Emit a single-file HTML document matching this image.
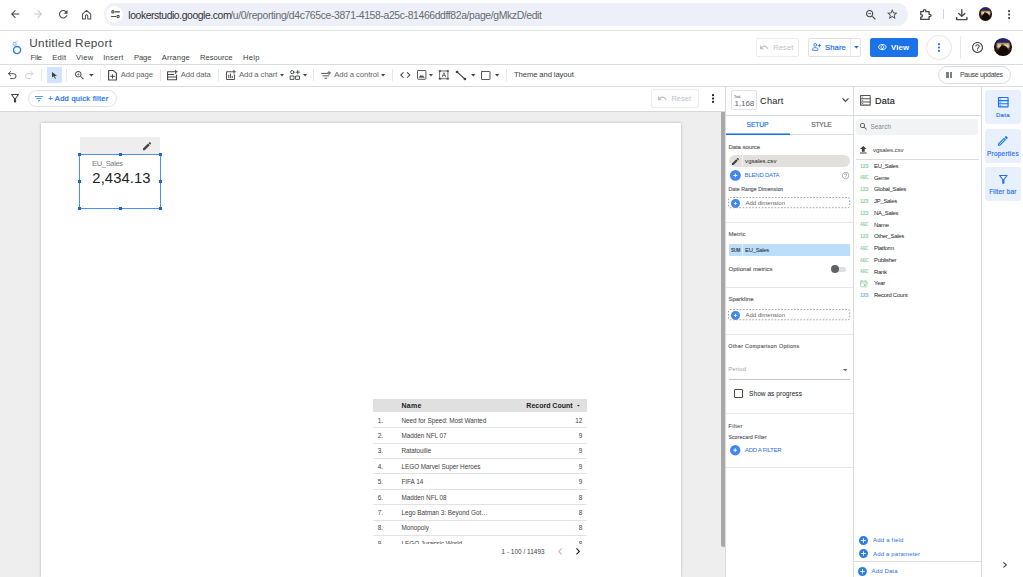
<!DOCTYPE html>
<html lang="en">
<head>
<meta charset="utf-8">
<title>Untitled Report - Looker Studio</title>
<style>
*{box-sizing:border-box;margin:0;padding:0}
html,body{width:1023px;height:577px;overflow:hidden;background:#fff;font-family:"Liberation Sans",sans-serif;color:#3c4043}
.a{position:absolute}
.t{position:absolute;white-space:nowrap;line-height:1}
svg{position:absolute;overflow:visible}

</style>
</head>
<body>
<div class="a" style="left:0px;top:0px;width:1023px;height:30px;background:#ffffff;"></div>
<div class="a" style="left:0px;top:30px;width:1023px;height:1px;background:#e1e3e6;"></div>
<svg style="left:10.6px;top:10.3px;width:8.2px;height:8.2px" viewBox="4 4 16 16" preserveAspectRatio="none" fill="#474747" ><path d="M20 11H7.83l5.59-5.59L12 4l-8 8 8 8 1.41-1.41L7.83 13H20v-2z"/></svg>
<svg style="left:34.4px;top:10.3px;width:8.1px;height:8.2px" viewBox="4 4 16 16" preserveAspectRatio="none" fill="#c7c7c7" ><path d="M12 4l-1.41 1.41L16.17 11H4v2h12.17l-5.58 5.59L12 20l8-8z"/></svg>
<svg style="left:58.5px;top:10px;width:8.5px;height:8.5px" viewBox="4 4 16 16" preserveAspectRatio="none" fill="#474747" ><path d="M17.65 6.35C16.2 4.9 14.21 4 12 4c-4.42 0-7.99 3.58-7.99 8s3.57 8 7.99 8c3.73 0 6.84-2.55 7.73-6h-2.08c-.82 2.33-3.04 4-5.65 4-3.31 0-6-2.69-6-6s2.69-6 6-6c1.66 0 3.14.69 4.22 1.78L13 11h7V4l-2.35 2.35z"/></svg>
<svg style="left:82px;top:9.6px;width:9.2px;height:9.6px" viewBox="2 2 20 20" preserveAspectRatio="none" fill="none" stroke="#474747" stroke-width="2.1" stroke-linecap="round" stroke-linejoin="round" ><path d="M3 10.5 12 3l9 7.5V21h-6.5v-6.5a2.5 2.5 0 0 0-5 0V21H3z"/></svg>
<div class="a" style="left:104px;top:3px;width:803.5px;height:22.6px;background:#edf0f9;border-radius:11.3px;"></div>
<div class="a" style="left:106px;top:5.6px;width:17.4px;height:17.4px;background:#ffffff;border-radius:8.7px;"></div>
<svg style="left:111px;top:10.1px;width:9px;height:8.4px" viewBox="3 4 18 16" preserveAspectRatio="none" fill="none" stroke="#474747" stroke-width="2.1" stroke-linecap="round" stroke-linejoin="round" ><path d="M11.500 7.500h8.500M4 16.500h8.500"/><circle cx="6.800" cy="7.500" r="2.300"/><circle cx="17.200" cy="16.500" r="2.300"/></svg>
<svg style="left:866px;top:9.6px;width:9.8px;height:9.8px" viewBox="3 3 17.49 17.49" preserveAspectRatio="none" fill="#474747" ><path d="M15.5 14h-.79l-.28-.27C15.41 12.59 16 11.11 16 9.5 16 5.91 13.09 3 9.5 3S3 5.91 3 9.5 5.91 16 9.5 16c1.61 0 3.09-.59 4.23-1.57l.27.28v.79l5 4.99L20.49 19l-4.99-5zm-6 0C7.01 14 5 11.99 5 9.5S7.01 5 9.5 5 14 7.01 14 9.5 11.99 14 9.5 14z"/><path d="M7 8.75h5v1.5H7z"/></svg>
<svg style="left:887px;top:9.3px;width:10.5px;height:10.0px" viewBox="2 2 20 19" preserveAspectRatio="none" fill="#474747" ><path d="M22 9.24l-7.19-.62L12 2 9.19 8.63 2 9.24l5.46 4.73L5.82 21 12 17.27 18.18 21l-1.63-7.03L22 9.24zM12 15.4l-3.76 2.27 1-4.28-3.32-2.88 4.38-.38L12 6.1l1.71 4.04 4.38.38-3.32 2.88 1 4.28L12 15.4z"/></svg>
<svg style="left:920px;top:8.7px;width:11.8px;height:11.2px" viewBox="3.4 3.3 17.7 17.8" preserveAspectRatio="none" fill="none" stroke="#474747" stroke-width="2" stroke-linecap="round" stroke-linejoin="round" stroke-linejoin="round"><path d="M4.500 7.500H8.400V6.300a1.900 1.900 0 0 1 3.800 0V7.500H17v4.300h1.100a1.900 1.900 0 0 1 0 3.800H17V20H4.500v-3.900h.700a2 2 0 0 0 0-4h-.700z"/></svg>
<div class="a" style="left:942.8px;top:9px;width:1.0px;height:10.4px;background:#c2d7f7;"></div>
<svg style="left:955.6px;top:8.8px;width:11.6px;height:11.2px" viewBox="3.5 3 17.0 17.5" preserveAspectRatio="none" fill="none" stroke="#474747" stroke-width="2" stroke-linecap="round" stroke-linejoin="round" ><path d="M12 4v10M7.5 10l4.5 4.5 4.5-4.5M4.5 16v3.5h15V16"/></svg>
<div class="a" style="left:978.7px;top:7.2px;width:13.6px;height:13.6px;border-radius:50%;background:radial-gradient(ellipse 30% 42% at 52% 80%,#140b08 0 85%,transparent 100%),linear-gradient(#b94c1f,#b94c1f) 46% 44%/15% 24% no-repeat,linear-gradient(90deg,#20150f 0 10%,transparent 22% 80%,#20150f 92%),linear-gradient(#24236b 0 24%,#b99a3c 29% 33%,#d9cdb8 38% 50%,#7a5a30 58%,#1d120b 70%)"></div>
<svg style="left:1008.3px;top:9.8px;width:2.2px;height:9.2px" viewBox="10 4 4 16" preserveAspectRatio="none" fill="#474747" ><path d="M12 8c1.1 0 2-.9 2-2s-.9-2-2-2-2 .9-2 2 .9 2 2 2zm0 2c-1.1 0-2 .9-2 2s.9 2 2 2 2-.9 2-2-.9-2-2-2zm0 6c-1.1 0-2 .9-2 2s.9 2 2 2 2-.9 2-2-.9-2-2-2z"/></svg>
<div class="a" style="left:0px;top:31px;width:1023px;height:33px;background:#ffffff;"></div>
<div class="a" style="left:0px;top:64px;width:1023px;height:1px;background:#dadce0;"></div>
<svg style="left:10px;top:38px;width:14px;height:18px" viewBox="10 38 14 18" fill="none" stroke="#2b7bee"><circle cx="17.050" cy="50.100" r="3.550" stroke-width="1.450"/><circle cx="14.700" cy="43.900" r="1.550" stroke-width=".850" stroke="#6ea3f3"/><circle cx="17" cy="41.400" r=".650" stroke-width=".550" stroke="#a8c7fa"/></svg>
<div class="a" style="left:755.9px;top:38px;width:42.8px;height:18.8px;border:1px solid #ececec;border-radius:2px;"></div>
<svg style="left:760px;top:45.1px;width:8.4px;height:4.6px" viewBox="2 7 20.5 9.5" preserveAspectRatio="none" fill="#bdc1c6" ><path d="M12.5 8c-2.65 0-5.05.99-6.9 2.6L2 7v9h9l-3.62-3.62c1.39-1.16 3.16-1.88 5.12-1.88 3.54 0 6.55 2.31 7.6 5.5l2.37-.78C21.08 11.03 17.15 8 12.5 8z"/></svg>
<div class="a" style="left:807.5px;top:38px;width:53.9px;height:18.8px;border:1px solid #e0e2e6;border-radius:2px;"></div>
<div class="a" style="left:850.4px;top:38.5px;width:1.0px;height:17.8px;background:#e4e6ea;"></div>
<svg style="left:811.6px;top:43.2px;width:9.2px;height:7.4px" viewBox="1.5 4 21.5 16" preserveAspectRatio="none" fill="none" stroke="#1a73e8" stroke-width="1.9" stroke-linecap="round" stroke-linejoin="round" ><circle cx="9" cy="8" r="3.2"/><path d="M2.5 19v-1.2c0-2.4 3.2-3.8 6.5-3.8s6.500 1.400 6.500 3.8V19zM19 6.500v6M16 9.500h6"/></svg>
<svg style="left:853.7px;top:46.199999999999996px;width:4.9px;height:2.4px" viewBox="7 10 10 5" preserveAspectRatio="none" fill="#1a73e8" ><path d="M7 10l5 5 5-5z"/></svg>
<div class="a" style="left:869.7px;top:37.8px;width:48.3px;height:19.1px;background:#1a73e8;border-radius:2.2px;"></div>
<svg style="left:877.9px;top:44.2px;width:8.7px;height:6.2px" viewBox="1 4 22 15" preserveAspectRatio="none" fill="#ffffff" ><path d="M12 6c3.79 0 7.17 2.13 8.82 5.5C19.17 14.87 15.79 17 12 17s-7.17-2.13-8.82-5.5C4.83 8.13 8.21 6 12 6m0-2C7 4 2.73 7.11 1 11.5 2.73 15.89 7 19 12 19s9.27-3.11 11-7.5C21.27 7.11 17 4 12 4zm0 5c1.38 0 2.5 1.12 2.5 2.5S13.38 14 12 14s-2.5-1.12-2.5-2.5S10.62 9 12 9m0-2c-2.48 0-4.5 2.02-4.5 4.5S9.52 16 12 16s4.5-2.02 4.5-4.5S14.48 7 12 7z"/></svg>
<div class="a" style="left:926.3px;top:34.7px;width:25.5px;height:25.1px;border:1px solid #e3e5e8;border-radius:13px;"></div>
<svg style="left:938.3px;top:42.9px;width:2.0px;height:9.1px" viewBox="10 4 4 16" preserveAspectRatio="none" fill="#1a73e8" ><path d="M12 8c1.1 0 2-.9 2-2s-.9-2-2-2-2 .9-2 2 .9 2 2 2zm0 2c-1.1 0-2 .9-2 2s.9 2 2 2 2-.9 2-2-.9-2-2-2zm0 6c-1.1 0-2 .9-2 2s.9 2 2 2 2-.9 2-2-.9-2-2-2z"/></svg>
<div class="a" style="left:960.3px;top:35.5px;width:1.0px;height:23.5px;background:#e8eaed;"></div>
<svg style="left:971.6px;top:41.9px;width:11.0px;height:11.0px" viewBox="2 2 20 20" preserveAspectRatio="none" fill="#444746" ><path d="M11 18h2v-2h-2v2zm1-16C6.48 2 2 6.48 2 12s4.48 10 10 10 10-4.48 10-10S17.52 2 12 2zm0 18c-4.41 0-8-3.59-8-8s3.59-8 8-8 8 3.59 8 8-3.59 8-8 8zm0-14c-2.21 0-4 1.79-4 4h2c0-1.1.9-2 2-2s2 .9 2 2c0 2-3 1.75-3 5h2c0-2.25 3-2.5 3-5 0-2.21-1.79-4-4-4z"/></svg>
<div class="a" style="left:994px;top:38.4px;width:17.6px;height:17.6px;border-radius:50%;background:radial-gradient(ellipse 30% 42% at 52% 80%,#140b08 0 85%,transparent 100%),linear-gradient(#b94c1f,#b94c1f) 46% 44%/15% 24% no-repeat,linear-gradient(90deg,#20150f 0 10%,transparent 22% 80%,#20150f 92%),linear-gradient(#24236b 0 24%,#b99a3c 29% 33%,#d9cdb8 38% 50%,#7a5a30 58%,#1d120b 70%)"></div>
<div class="a" style="left:0px;top:65px;width:1023px;height:21px;background:#ffffff;"></div>
<div class="a" style="left:0px;top:86px;width:1023px;height:1px;background:#dadce0;"></div>
<svg style="left:8.1px;top:71px;width:8.5px;height:8px" viewBox="2.5 3 18.5 18" preserveAspectRatio="none" fill="none" stroke="#3c4043" stroke-width="2.1" stroke-linecap="round" stroke-linejoin="round" ><path d="M8.2 4.200 3.5 9l4.700 4.800M4 9h10.500a5.500 5.500 0 0 1 0 11H8"/></svg>
<svg style="left:25px;top:71px;width:8.5px;height:8px" viewBox="2.5 3 18.5 18" preserveAspectRatio="none" fill="none" stroke="#c9ccd0" stroke-width="2.1" stroke-linecap="round" stroke-linejoin="round" transform="scale(-1,1)"><path d="M8.2 4.200 3.5 9l4.700 4.800M4 9h10.500a5.500 5.500 0 0 1 0 11H8"/></svg>
<div class="a" style="left:41.1px;top:68.9px;width:1.0px;height:12.5px;background:#e4e6e9;"></div>
<div class="a" style="left:46.5px;top:67px;width:15.7px;height:15.6px;background:#d2e3fc;border-radius:1px;"></div>
<svg style="left:52px;top:72.2px;width:5px;height:6.8px" viewBox="7 2 12 20" preserveAspectRatio="none" fill="#3c4043" ><path d="M7 2l12 11.2-5.8.5 3.3 7.3-2.2 1-3.2-7.4L7 18.5z"/></svg>
<div class="a" style="left:65.9px;top:68.9px;width:1.0px;height:12.5px;background:#e4e6e9;"></div>
<svg style="left:74.75px;top:70.75px;width:8.85px;height:8.55px" viewBox="3 3 17.49 17.49" preserveAspectRatio="none" fill="#444746" ><path d="M15.5 14h-.79l-.28-.27C15.41 12.59 16 11.11 16 9.5 16 5.91 13.09 3 9.5 3S3 5.91 3 9.5 5.91 16 9.5 16c1.61 0 3.09-.59 4.23-1.57l.27.28v.79l5 4.99L20.49 19l-4.99-5zm-6 0C7.01 14 5 11.99 5 9.5S7.01 5 9.5 5 14 7.01 14 9.5 11.99 14 9.5 14z"/><path d="M12 10h-2v2H9v-2H7V9h2V7h1v2h2z"/></svg>
<svg style="left:88.7px;top:73.6px;width:4.7px;height:2.4px" viewBox="7 10 10 5" preserveAspectRatio="none" fill="#444746" ><path d="M7 10l5 5 5-5z"/></svg>
<div class="a" style="left:99.8px;top:68.9px;width:1.0px;height:12.5px;background:#e4e6e9;"></div>
<svg style="left:108px;top:70px;width:9px;height:10.5px" viewBox="5 2 15 20" preserveAspectRatio="none" fill="none" stroke="#444746" stroke-width="1.9" stroke-linecap="round" stroke-linejoin="round" ><path d="M6 3h8l5 5v13H6z" /><path d="M12.500 10.500v7M9 14h7" stroke-width="1.700"/></svg>
<div class="a" style="left:159.9px;top:68.9px;width:1.0px;height:12.5px;background:#e4e6e9;"></div>
<svg style="left:166.9px;top:69.8px;width:10.7px;height:10.2px" viewBox="3 1.5 19 19.5" preserveAspectRatio="none" fill="none" stroke="#444746" stroke-width="1.9" stroke-linecap="round" stroke-linejoin="round" ><path d="M15 5H4v15h16V11M4 10h11M4 15h16M18.500 2v6M15.500 5h6"/></svg>
<div class="a" style="left:217.5px;top:68.9px;width:1.0px;height:12.5px;background:#e4e6e9;"></div>
<svg style="left:225.6px;top:69.8px;width:9.7px;height:10.0px" viewBox="3 1 19.5 20" preserveAspectRatio="none" fill="none" stroke="#444746" stroke-width="1.9" stroke-linecap="round" stroke-linejoin="round" ><path d="M14 4.500H4V20h16V10.500M8.500 16.500v-5M12 16.500V9M15.500 16.500v-3M19 1.500v6M16 4.500h6"/></svg>
<svg style="left:280.3px;top:73.6px;width:4.1px;height:2.4px" viewBox="7 10 10 5" preserveAspectRatio="none" fill="#444746" ><path d="M7 10l5 5 5-5z"/></svg>
<svg style="left:290px;top:69.9px;width:10px;height:9.9px" viewBox="2 1.5 20 20.5" preserveAspectRatio="none" fill="none" stroke="#444746" stroke-width="1.9" stroke-linecap="round" stroke-linejoin="round" ><circle cx="6.500" cy="6" r="3.300"/><rect x="3" y="14" width="7" height="7"/><rect x="14" y="14" width="7" height="7"/><path d="M17.500 2.500v7M14 6h7"/></svg>
<svg style="left:302.7px;top:73.6px;width:4.2px;height:2.4px" viewBox="7 10 10 5" preserveAspectRatio="none" fill="#444746" ><path d="M7 10l5 5 5-5z"/></svg>
<div class="a" style="left:313.25px;top:68.9px;width:1.0px;height:12.5px;background:#e4e6e9;"></div>
<svg style="left:321px;top:70.6px;width:10px;height:8.0px" viewBox="2 2 20.5 16.5" preserveAspectRatio="none" fill="none" stroke="#444746" stroke-width="1.9" stroke-linecap="round" stroke-linejoin="round" ><path d="M3 7h12M6 12h12M10 17h4M18.500 3v6M15.500 6h6" /></svg>
<svg style="left:381.3px;top:73.6px;width:4.3px;height:2.4px" viewBox="7 10 10 5" preserveAspectRatio="none" fill="#444746" ><path d="M7 10l5 5 5-5z"/></svg>
<div class="a" style="left:392.0px;top:68.9px;width:1.0px;height:12.5px;background:#e4e6e9;"></div>
<svg style="left:400px;top:72.2px;width:10.6px;height:6.1px" viewBox="2 6 20 12" preserveAspectRatio="none" fill="#3c4043" ><path d="M9.4 16.6L4.8 12l4.6-4.6L8 6l-6 6 6 6 1.4-1.4zm5.2 0l4.6-4.6-4.6-4.6L16 6l6 6-6 6-1.4-1.4z"/></svg>
<svg style="left:416.9px;top:70px;width:9.4px;height:9.8px" viewBox="2.5 2.5 19.0 19.0" preserveAspectRatio="none" fill="none" stroke="#444746" stroke-width="1.8" stroke-linecap="round" stroke-linejoin="round" ><rect x="3.500" y="3.500" width="17" height="17" rx="1.500"/><path d="M7 16.500l3.200-4 2.300 2.800 1.700-2 2.800 3.200z" fill="#444746" stroke-width="1"/></svg>
<svg style="left:428.9px;top:73.6px;width:4.0px;height:2.4px" viewBox="7 10 10 5" preserveAspectRatio="none" fill="#444746" ><path d="M7 10l5 5 5-5z"/></svg>
<svg style="left:439px;top:70.1px;width:9.9px;height:9.7px" viewBox="2 2 20 20" preserveAspectRatio="none" fill="none" stroke="#444746" stroke-width="2" stroke-linecap="round" stroke-linejoin="round" ><rect x="4" y="4" width="16" height="16" stroke-width="1.600"/><path d="M8.500 16.500 12 7.500l3.500 9M9.800 13.500h4.400" stroke-width="1.500"/><path d="M2.500 2.500h3v3h-3zM18.500 2.500h3v3h-3zM2.500 18.500h3v3h-3zM18.500 18.500h3v3h-3z" fill="#444746" stroke-width=".5"/></svg>
<svg style="left:456px;top:70.6px;width:10px;height:9.0px" viewBox="2.5 2.5 19.0 19.0" preserveAspectRatio="none" fill="none" stroke="#3c4043" stroke-width="2" stroke-linecap="round" stroke-linejoin="round" ><path d="M5 5 19 19" stroke-width="2.200"/><circle cx="4.500" cy="4.500" r="1.600" fill="#3c4043"/><circle cx="19.500" cy="19.500" r="1.600" fill="#3c4043"/></svg>
<svg style="left:470.5px;top:73.6px;width:4.5px;height:2.4px" viewBox="7 10 10 5" preserveAspectRatio="none" fill="#444746" ><path d="M7 10l5 5 5-5z"/></svg>
<svg style="left:480.5px;top:70.6px;width:9.5px;height:9.0px" viewBox="2.5 2.5 19.0 19.0" preserveAspectRatio="none" fill="none" stroke="#444746" stroke-width="1.9" stroke-linecap="round" stroke-linejoin="round" ><rect x="3.500" y="3.500" width="17" height="17" rx="1"/></svg>
<svg style="left:494.7px;top:73.6px;width:4.4px;height:2.4px" viewBox="7 10 10 5" preserveAspectRatio="none" fill="#444746" ><path d="M7 10l5 5 5-5z"/></svg>
<div class="a" style="left:506.0px;top:68.9px;width:1.0px;height:12.5px;background:#e4e6e9;"></div>
<div class="a" style="left:938.2px;top:66.2px;width:73.0px;height:17.8px;border:1px solid #dadce0;border-radius:9px;"></div>
<div class="a" style="left:946.4px;top:72.2px;width:2.3px;height:5.5px;background:#7b7f84;"></div>
<div class="a" style="left:950.1px;top:72.2px;width:2.3px;height:5.5px;background:#7b7f84;"></div>
<div class="a" style="left:0px;top:87px;width:725px;height:24px;background:#ffffff;"></div>
<div class="a" style="left:0px;top:111px;width:725px;height:1px;background:#d9d9d9;"></div>
<svg style="left:11px;top:94.2px;width:8px;height:8.6px" viewBox="4 4 16 16" preserveAspectRatio="none" fill="#3c4043" ><path d="M7 6h10l-5.01 6.3L7 6zm-2.75-.39C6.27 8.2 10 13 10 13v6c0 .55.45 1 1 1h2c.55 0 1-.45 1-1v-6s3.72-4.8 5.74-7.39c.51-.66.04-1.61-.79-1.61H5.04c-.83 0-1.3.95-.79 1.61z"/></svg>
<div class="a" style="left:28.1px;top:90.2px;width:88.6px;height:17.0px;border:1px solid #dfe2e6;border-radius:8.5px;"></div>
<svg style="left:35px;top:96px;width:7.8px;height:5.2px" viewBox="3 6 18 12" preserveAspectRatio="none" fill="#1a73e8" ><path d="M10 18h4v-2h-4v2zM3 6v2h18V6H3zm3 7h12v-2H6v2z"/></svg>
<div class="a" style="left:651.2px;top:89.2px;width:48.2px;height:18.6px;border:1px solid #ececec;border-radius:2px;"></div>
<svg style="left:658px;top:96.3px;width:8.6px;height:4.5px" viewBox="2 7 20.5 9.5" preserveAspectRatio="none" fill="#bdc1c6" ><path d="M12.5 8c-2.65 0-5.05.99-6.9 2.6L2 7v9h9l-3.62-3.62c1.39-1.16 3.16-1.88 5.12-1.88 3.54 0 6.55 2.31 7.6 5.5l2.37-.78C21.08 11.03 17.15 8 12.5 8z"/></svg>
<svg style="left:711.5px;top:94.2px;width:2.1px;height:9.0px" viewBox="10 4 4 16" preserveAspectRatio="none" fill="#202124" ><path d="M12 8c1.1 0 2-.9 2-2s-.9-2-2-2-2 .9-2 2 .9 2 2 2zm0 2c-1.1 0-2 .9-2 2s.9 2 2 2 2-.9 2-2-.9-2-2-2zm0 6c-1.1 0-2 .9-2 2s.9 2 2 2 2-.9 2-2-.9-2-2-2z"/></svg>
<div class="a" style="left:0px;top:112px;width:725px;height:465px;background:#eeeeee;"></div>
<div class="a" style="left:40.5px;top:123px;width:640.1px;height:454px;background:#ffffff;box-shadow:0 0 2.5px rgba(0,0,0,.28);"></div>
<div class="a" style="left:721px;top:112px;width:4.5px;height:435.3px;background:#a8a8a8;border-radius:0 0 2.5px 2.5px;"></div>
<div class="a" style="left:80px;top:137px;width:80px;height:16.5px;background:#eeeeee;"></div>
<svg style="left:142.9px;top:142px;width:8.2px;height:8.2px" viewBox="3 3 18 18" preserveAspectRatio="none" fill="#444444" ><path d="M3 17.25V21h3.75L17.81 9.94l-3.75-3.75L3 17.25zM20.71 7.04c.39-.39.39-1.02 0-1.41l-2.34-2.34c-.39-.39-1.02-.39-1.41 0l-1.83 1.83 3.75 3.75 1.83-1.83z"/></svg>
<div class="a" style="left:79px;top:154px;width:82px;height:55px;border:1px solid #4c8df6;"></div>
<div class="a" style="left:77.89999999999999px;top:152.9px;width:3.4px;height:3.4px;background:#1a66d9;"></div>
<div class="a" style="left:77.89999999999999px;top:179.9px;width:3.4px;height:3.4px;background:#1a66d9;"></div>
<div class="a" style="left:77.89999999999999px;top:206.9px;width:3.4px;height:3.4px;background:#1a66d9;"></div>
<div class="a" style="left:118.5px;top:152.9px;width:3.4px;height:3.4px;background:#1a66d9;"></div>
<div class="a" style="left:118.5px;top:206.9px;width:3.4px;height:3.4px;background:#1a66d9;"></div>
<div class="a" style="left:158.9px;top:152.9px;width:3.4px;height:3.4px;background:#1a66d9;"></div>
<div class="a" style="left:158.9px;top:179.9px;width:3.4px;height:3.4px;background:#1a66d9;"></div>
<div class="a" style="left:158.9px;top:206.9px;width:3.4px;height:3.4px;background:#1a66d9;"></div>
<div class="a" style="left:373px;top:399px;width:214px;height:13.4px;background:#e0e0e0;"></div>
<svg style="left:576.7px;top:404.9px;width:2.8px;height:1.6px" viewBox="7 10 10 5" preserveAspectRatio="none" fill="#212121" ><path d="M7 10l5 5 5-5z"/></svg>
<div class="a" style="left:373px;top:427.1px;width:214px;height:1.0px;background:#e2e2e2;"></div>
<div class="a" style="left:373px;top:442.52000000000004px;width:214px;height:1.0px;background:#e2e2e2;"></div>
<div class="a" style="left:373px;top:457.94px;width:214px;height:1.0px;background:#e2e2e2;"></div>
<div class="a" style="left:373px;top:473.36px;width:214px;height:1.0px;background:#e2e2e2;"></div>
<div class="a" style="left:373px;top:488.78000000000003px;width:214px;height:1.0px;background:#e2e2e2;"></div>
<div class="a" style="left:373px;top:504.20000000000005px;width:214px;height:1.0px;background:#e2e2e2;"></div>
<div class="a" style="left:373px;top:519.62px;width:214px;height:1.0px;background:#e2e2e2;"></div>
<div class="a" style="left:373px;top:535.04px;width:214px;height:1.0px;background:#e2e2e2;"></div>
<svg style="left:557.5px;top:548px;width:4.1px;height:6.8px" viewBox="8 6 7.41 12" preserveAspectRatio="none" fill="#bdbdbd" ><path d="M15.41 7.41L14 6l-6 6 6 6 1.41-1.41L10.83 12z"/></svg>
<svg style="left:576px;top:548px;width:4.2px;height:6.8px" viewBox="8.59 6 7.41 12" preserveAspectRatio="none" fill="#212121" ><path d="M10 6L8.59 7.41 13.17 12l-4.58 4.59L10 18l6-6z"/></svg>
<div class="a" style="left:725.5px;top:87px;width:128.0px;height:490px;background:#ffffff;"></div>
<div class="a" style="left:725px;top:87px;width:1px;height:490px;background:#dcdcdc;"></div>
<div class="a" style="left:853px;top:87px;width:1px;height:490px;background:#dadce0;"></div>
<div class="a" style="left:726px;top:115px;width:128px;height:1px;background:#dadce0;"></div>
<div class="a" style="left:730.8px;top:90.3px;width:26.7px;height:20.2px;border:1px solid #e0e2e5;border-radius:2px;"></div>
<svg style="left:842px;top:98.4px;width:6.9px;height:4.2px" viewBox="6 8.59 12 7.41" preserveAspectRatio="none" fill="#444746" ><path d="M16.59 8.59L12 13.17 7.41 8.59 6 10l6 6 6-6z"/></svg>
<div class="a" style="left:726px;top:134px;width:127px;height:1px;background:#dadce0;"></div>
<div class="a" style="left:726px;top:133px;width:63.5px;height:1px;background:#7fadf3;"></div>
<div class="a" style="left:726px;top:134px;width:63.5px;height:1px;background:#1a73e8;"></div>
<div class="a" style="left:728.6px;top:155px;width:121.5px;height:11.8px;background:#e3dfdc;border-radius:6px;"></div>
<div class="a" style="left:741.9px;top:155px;width:0.8px;height:11.8px;background:#f3f1ef;"></div>
<svg style="left:732px;top:157.5px;width:7px;height:6.9px" viewBox="3 3 18 18" preserveAspectRatio="none" fill="#3c4043" ><path d="M3 17.25V21h3.75L17.81 9.94l-3.75-3.75L3 17.25zM20.71 7.04c.39-.39.39-1.02 0-1.41l-2.34-2.34c-.39-.39-1.02-.39-1.41 0l-1.83 1.83 3.75 3.75 1.83-1.83z"/></svg>
<svg style="left:729.6px;top:169.5px;width:10.8px;height:10.8px" viewBox="2 2 20 20" preserveAspectRatio="none" fill="#4285f4" ><circle cx="12" cy="12" r="10"/><path d="M12 8.400v7.200M8.400 12h7.200" stroke="#fff" stroke-width="1.900"/></svg>
<svg style="left:842.3px;top:171.8px;width:7.2px;height:7.2px" viewBox="2 2 20 20" preserveAspectRatio="none" fill="#9aa0a6" ><path d="M11 18h2v-2h-2v2zm1-16C6.48 2 2 6.48 2 12s4.48 10 10 10 10-4.48 10-10S17.52 2 12 2zm0 18c-4.41 0-8-3.59-8-8s3.59-8 8-8 8 3.59 8 8-3.59 8-8 8zm0-14c-2.21 0-4 1.79-4 4h2c0-1.1.9-2 2-2s2 .9 2 2c0 2-3 1.75-3 5h2c0-2.25 3-2.5 3-5 0-2.21-1.79-4-4-4z"/></svg>
<svg style="left:728.2px;top:197.4px;width:122.2px;height:11.2px" viewBox="0 0 122.2 11.2" fill="none"><rect x=".5" y=".5" width="121.2" height="10.2" rx="1.5" stroke="#9aa0a6" stroke-width=".9" stroke-dasharray="1.7 1.5"/></svg>
<svg style="left:731px;top:198.6px;width:9px;height:8.9px" viewBox="2 2 20 20" preserveAspectRatio="none" fill="#4285f4" ><circle cx="12" cy="12" r="10"/><path d="M12 8.400v7.200M8.400 12h7.200" stroke="#fff" stroke-width="1.900"/></svg>
<div class="a" style="left:726px;top:222px;width:127px;height:1px;background:#e4e6e9;"></div>
<div class="a" style="left:728.6px;top:244.2px;width:121.4px;height:11.5px;background:#bbdefb;border-radius:1px;"></div>
<div class="a" style="left:741.9px;top:244.2px;width:0.8px;height:11.5px;background:#dcedfc;"></div>
<div class="a" style="left:834px;top:267.1px;width:12px;height:4.6px;background:#dcdee1;border-radius:2.3px;"></div>
<div class="a" style="left:831.1px;top:265px;width:8.4px;height:8.4px;background:#5f6368;border-radius:4.2px;"></div>
<div class="a" style="left:726px;top:287px;width:127px;height:1px;background:#e4e6e9;"></div>
<svg style="left:728.2px;top:309.3px;width:122.2px;height:11.3px" viewBox="0 0 122.2 11.3" fill="none"><rect x=".5" y=".5" width="121.2" height="10.3" rx="1.5" stroke="#9aa0a6" stroke-width=".9" stroke-dasharray="1.7 1.5"/></svg>
<svg style="left:731px;top:310.6px;width:9px;height:8.9px" viewBox="2 2 20 20" preserveAspectRatio="none" fill="#4285f4" ><circle cx="12" cy="12" r="10"/><path d="M12 8.400v7.200M8.400 12h7.200" stroke="#fff" stroke-width="1.900"/></svg>
<div class="a" style="left:726px;top:334px;width:127px;height:1px;background:#e4e6e9;"></div>
<svg style="left:843.1px;top:368.6px;width:4.5px;height:2.3px" viewBox="7 10 10 5" preserveAspectRatio="none" fill="#5f6368" ><path d="M7 10l5 5 5-5z"/></svg>
<div class="a" style="left:728.7px;top:379px;width:121.4px;height:1px;background:#c4c4c4;"></div>
<div class="a" style="left:733.9px;top:389.2px;width:9.6px;height:9.2px;border:1px solid #4a4a4a;border-radius:1px;"></div>
<div class="a" style="left:726px;top:413px;width:127px;height:1px;background:#e4e6e9;"></div>
<svg style="left:729.7px;top:444.8px;width:10.4px;height:10.4px" viewBox="2 2 20 20" preserveAspectRatio="none" fill="#4285f4" ><circle cx="12" cy="12" r="10"/><path d="M12 8.400v7.200M8.400 12h7.200" stroke="#fff" stroke-width="1.900"/></svg>
<div class="a" style="left:726px;top:467px;width:127px;height:1px;background:#e4e6e9;"></div>
<div class="a" style="left:854px;top:87px;width:127px;height:490px;background:#ffffff;"></div>
<div class="a" style="left:981px;top:87px;width:1px;height:490px;background:#dadce0;"></div>
<div class="a" style="left:982px;top:87px;width:41px;height:490px;background:#ffffff;"></div>
<div class="a" style="left:854px;top:115px;width:127px;height:1px;background:#dadce0;"></div>
<svg style="left:859.8px;top:95.1px;width:10.8px;height:10.7px" viewBox="2.5 2.5 19.0 19.0" preserveAspectRatio="none" fill="none" stroke="#505357" stroke-width="1.8" stroke-linecap="round" stroke-linejoin="round" ><rect x="3.500" y="3.500" width="17" height="17" rx=".3"/><path d="M3.500 9.200h17M3.500 14.800h17"/><path d="M6 6.300h1.500M6 12h1.500M6 17.700h1.500" stroke-width="1.300"/></svg>
<div class="a" style="left:856.3px;top:119px;width:121.7px;height:15.7px;background:#f1f3f4;border-radius:4px;"></div>
<svg style="left:859.8px;top:123.4px;width:6.8px;height:6.8px" viewBox="3 3 17.49 17.49" preserveAspectRatio="none" fill="#444746" ><path d="M15.5 14h-.79l-.28-.27C15.41 12.59 16 11.11 16 9.5 16 5.91 13.09 3 9.5 3S3 5.91 3 9.5 5.91 16 9.5 16c1.61 0 3.09-.59 4.23-1.57l.27.28v.79l5 4.99L20.49 19l-4.99-5zm-6 0C7.01 14 5 11.99 5 9.5S7.01 5 9.5 5 14 7.01 14 9.5 11.99 14 9.5 14z"/></svg>
<svg style="left:860.3px;top:146.1px;width:6.6px;height:7.4px" viewBox="5 3 14 17" preserveAspectRatio="none" fill="#3c4043" ><path d="M9 16h6v-6h4l-7-7-7 7h4zm-4 2h14v2H5z"/></svg>
<div class="a" style="left:856.2px;top:159px;width:122.5px;height:1px;background:#dadce0;"></div>
<svg style="left:860.3px;top:279.5px;width:7.3px;height:7.3px" viewBox="3 2 18 19" preserveAspectRatio="none" fill="none" stroke="#8ed1a1" stroke-width="1.8" stroke-linecap="round" stroke-linejoin="round" ><rect x="4" y="5" width="16" height="15" rx="1.500"/><path d="M4 9.500h16M8 3v3M16 3v3" /><rect x="13" y="13" width="4" height="4" fill="#6cc287" stroke="none"/></svg>
<svg style="left:859px;top:536px;width:9px;height:9px" viewBox="2 2 20 20" preserveAspectRatio="none" fill="#2b7de9" ><path d="M12 2C6.48 2 2 6.48 2 12s4.48 10 10 10 10-4.48 10-10S17.52 2 12 2zm5 11h-4v4h-2v-4H7v-2h4V7h2v4h4v2z"/></svg>
<svg style="left:859px;top:549.2px;width:9px;height:9.0px" viewBox="2 2 20 20" preserveAspectRatio="none" fill="#2b7de9" ><path d="M12 2C6.48 2 2 6.48 2 12s4.48 10 10 10 10-4.48 10-10S17.52 2 12 2zm5 11h-4v4h-2v-4H7v-2h4V7h2v4h4v2z"/></svg>
<div class="a" style="left:854px;top:561px;width:127px;height:1px;background:#dadce0;"></div>
<svg style="left:857.9px;top:567px;width:8.9px;height:9px" viewBox="2 2 20 20" preserveAspectRatio="none" fill="#2b7de9" ><path d="M12 2C6.48 2 2 6.48 2 12s4.48 10 10 10 10-4.48 10-10S17.52 2 12 2zm5 11h-4v4h-2v-4H7v-2h4V7h2v4h4v2z"/></svg>
<div class="a" style="left:984.8px;top:90.2px;width:36.1px;height:34.1px;background:#e8f0fe;border-radius:3px;"></div>
<div class="a" style="left:984.8px;top:128.8px;width:36.1px;height:33.8px;background:#e8f0fe;border-radius:3px;"></div>
<div class="a" style="left:984.8px;top:167.4px;width:36.1px;height:33.4px;background:#e8f0fe;border-radius:3px;"></div>
<svg style="left:997.5px;top:97.4px;width:10.6px;height:10.4px" viewBox="2.5 2.5 19.0 19.0" preserveAspectRatio="none" fill="none" stroke="#1a73e8" stroke-width="2.1" stroke-linecap="round" stroke-linejoin="round" ><rect x="3.500" y="3.500" width="17" height="17" rx=".3"/><path d="M3.500 9.200h17M3.500 14.800h17"/><path d="M6 6.300h1.500M6 12h1.500M6 17.700h1.500" stroke-width="1.300"/></svg>
<svg style="left:998px;top:136.4px;width:9.8px;height:9.8px" viewBox="3 3 18 18" preserveAspectRatio="none" fill="#1a73e8" ><path d="M14.06 9.02l.92.92L5.92 19H5v-.92l9.06-9.06M17.66 3c-.25 0-.51.1-.7.29l-1.83 1.83 3.75 3.75 1.83-1.83c.39-.39.39-1.02 0-1.41l-2.34-2.34c-.2-.2-.45-.29-.71-.29zm-3.6 3.190L3 17.25V21h3.75L17.81 9.94l-3.75-3.750z"/></svg>
<svg style="left:998.6px;top:175.3px;width:8.7px;height:8.7px" viewBox="4 4 16 16" preserveAspectRatio="none" fill="#1a73e8" ><path d="M7 6h10l-5.01 6.3L7 6zm-2.75-.39C6.27 8.2 10 13 10 13v6c0 .55.45 1 1 1h2c.55 0 1-.45 1-1v-6s3.72-4.8 5.74-7.39c.51-.66.04-1.61-.79-1.61H5.04c-.83 0-1.3.95-.79 1.61z"/></svg>
<svg style="left:1003px;top:562px;width:4.2px;height:5.8px" viewBox="8.59 6 7.41 12" preserveAspectRatio="none" fill="#3c4043" ><path d="M10 6L8.59 7.41 13.17 12l-4.58 4.59L10 18l6-6z"/></svg>
<div class="t" id="t0" style="top:11px;font-size:10.4px;color:#303134;letter-spacing:-0.427px;left:128.32px;">lookerstudio.google.com</div>
<div class="t" id="t1" style="top:11px;font-size:10.4px;color:#676a6e;letter-spacing:-0.368px;left:230.22px;">/u/0/reporting/d4c765ce-3871-4158-a25c-81466ddff82a/page/gMkzD/edit</div>
<div class="t" id="t2" style="top:38px;font-size:11.8px;color:#444746;letter-spacing:0.289px;left:29.23px;">Untitled Report</div>
<div class="t" id="t3" style="top:54px;font-size:7.6px;color:#3c4043;letter-spacing:-0.221px;left:30.51px;">File</div>
<div class="t" id="t4" style="top:54px;font-size:7.6px;color:#3c4043;letter-spacing:0.248px;left:52.26px;">Edit</div>
<div class="t" id="t5" style="top:54px;font-size:7.6px;color:#3c4043;letter-spacing:0.303px;left:76.01px;">View</div>
<div class="t" id="t6" style="top:54px;font-size:7.6px;color:#3c4043;letter-spacing:0.248px;left:103.26px;">Insert</div>
<div class="t" id="t7" style="top:54px;font-size:7.6px;color:#3c4043;letter-spacing:-0.087px;left:134.01px;">Page</div>
<div class="t" id="t8" style="top:54px;font-size:7.6px;color:#3c4043;letter-spacing:0.176px;left:161.71px;">Arrange</div>
<div class="t" id="t9" style="top:54px;font-size:7.6px;color:#3c4043;letter-spacing:0.013px;left:200.01px;">Resource</div>
<div class="t" id="t10" style="top:54px;font-size:7.6px;color:#3c4043;letter-spacing:0.221px;left:243.11px;">Help</div>
<div class="t" id="t11" style="top:44px;font-size:7.5px;color:#bdc1c6;letter-spacing:0.108px;left:773.26px;">Reset</div>
<div class="t" id="t12" style="top:44px;font-size:7.7px;color:#1a73e8;-webkit-text-stroke:.16px currentColor;letter-spacing:0.071px;left:825.0px;-webkit-text-stroke:.2px currentColor;">Share</div>
<div class="t" id="t13" style="top:44px;font-size:7.8px;color:#ffffff;font-weight:bold;letter-spacing:0.124px;left:890.99px;">View</div>
<div class="t" id="t14" style="top:71px;font-size:7.7px;color:#5f6368;letter-spacing:-0.096px;left:120.75px;">Add page</div>
<div class="t" id="t15" style="top:71px;font-size:7.7px;color:#5f6368;letter-spacing:-0.111px;left:180.75px;">Add data</div>
<div class="t" id="t16" style="top:71px;font-size:7.7px;color:#5f6368;letter-spacing:-0.083px;left:238.9px;">Add a chart</div>
<div class="t" id="t17" style="top:71px;font-size:7.7px;color:#5f6368;letter-spacing:-0.08px;left:334.25px;">Add a control</div>
<div class="t" id="t18" style="top:71px;font-size:7.7px;color:#3c4043;letter-spacing:-0.116px;left:514.0px;">Theme and layout</div>
<div class="t" id="t19" style="top:71px;font-size:7.2px;color:#3c4043;letter-spacing:-0.324px;left:959.63px;transform:scaleX(0.9763);transform-origin:left;">Pause updates</div>
<div class="t" id="t20" style="top:95px;font-size:7.5px;color:#1a73e8;-webkit-text-stroke:.16px currentColor;letter-spacing:0.278px;left:48.26px;-webkit-text-stroke:.22px currentColor;">+ Add quick filter</div>
<div class="t" id="t21" style="top:95px;font-size:7.5px;color:#bdc1c6;letter-spacing:0.02px;left:671.41px;">Reset</div>
<div class="t" id="t22" style="top:160px;font-size:7.9px;color:#7a7a7a;letter-spacing:-0.355px;left:92.39px;transform:scaleX(0.9547);transform-origin:left;">EU_Sales</div>
<div class="t" id="t23" style="top:171px;font-size:14.8px;color:#212121;letter-spacing:0.088px;left:92.34px;">2,434.13</div>
<div class="t" id="t24" style="top:402px;font-size:7px;color:#212121;font-weight:bold;letter-spacing:0.277px;left:401.44px;">Name</div>
<div class="t" id="t25" style="top:402px;font-size:7px;color:#212121;font-weight:bold;letter-spacing:-0.006px;left:526.34px;">Record Count</div>
<div class="t" id="t26" style="top:418px;font-size:6.4px;color:#424242;letter-spacing:-0.039px;left:377.78px;">1.</div>
<div class="t" id="t27" style="top:418px;font-size:6.4px;color:#424242;letter-spacing:-0.039px;left:401.48px;">Need for Speed: Most Wanted</div>
<div class="t" id="t28" style="top:418px;font-size:6.4px;color:#424242;letter-spacing:-0.039px;right:440.64px;">12</div>
<div class="t" id="t29" style="top:433px;font-size:6.4px;color:#424242;letter-spacing:-0.039px;left:377.78px;">2.</div>
<div class="t" id="t30" style="top:433px;font-size:6.4px;color:#424242;letter-spacing:-0.039px;left:401.48px;">Madden NFL 07</div>
<div class="t" id="t31" style="top:433px;font-size:6.4px;color:#424242;letter-spacing:-0.039px;right:440.64px;">9</div>
<div class="t" id="t32" style="top:448px;font-size:6.4px;color:#424242;letter-spacing:-0.039px;left:377.78px;">3.</div>
<div class="t" id="t33" style="top:448px;font-size:6.4px;color:#424242;letter-spacing:-0.039px;left:401.48px;">Ratatouille</div>
<div class="t" id="t34" style="top:448px;font-size:6.4px;color:#424242;letter-spacing:-0.039px;right:440.64px;">9</div>
<div class="t" id="t35" style="top:464px;font-size:6.4px;color:#424242;letter-spacing:-0.039px;left:377.78px;">4.</div>
<div class="t" id="t36" style="top:464px;font-size:6.4px;color:#424242;letter-spacing:-0.039px;left:401.48px;">LEGO Marvel Super Heroes</div>
<div class="t" id="t37" style="top:464px;font-size:6.4px;color:#424242;letter-spacing:-0.039px;right:440.64px;">9</div>
<div class="t" id="t38" style="top:479px;font-size:6.4px;color:#424242;letter-spacing:-0.039px;left:377.78px;">5.</div>
<div class="t" id="t39" style="top:479px;font-size:6.4px;color:#424242;letter-spacing:-0.039px;left:401.48px;">FIFA 14</div>
<div class="t" id="t40" style="top:479px;font-size:6.4px;color:#424242;letter-spacing:-0.039px;right:440.64px;">9</div>
<div class="t" id="t41" style="top:495px;font-size:6.4px;color:#424242;letter-spacing:-0.039px;left:377.78px;">6.</div>
<div class="t" id="t42" style="top:495px;font-size:6.4px;color:#424242;letter-spacing:-0.039px;left:401.48px;">Madden NFL 08</div>
<div class="t" id="t43" style="top:495px;font-size:6.4px;color:#424242;letter-spacing:-0.039px;right:440.64px;">8</div>
<div class="t" id="t44" style="top:510px;font-size:6.4px;color:#424242;letter-spacing:-0.039px;left:377.78px;">7.</div>
<div class="t" id="t45" style="top:510px;font-size:6.4px;color:#424242;letter-spacing:-0.039px;left:401.48px;">Lego Batman 3: Beyond Got…</div>
<div class="t" id="t46" style="top:510px;font-size:6.4px;color:#424242;letter-spacing:-0.039px;right:440.64px;">8</div>
<div class="t" id="t47" style="top:525px;font-size:6.4px;color:#424242;letter-spacing:-0.039px;left:377.78px;">8.</div>
<div class="t" id="t48" style="top:525px;font-size:6.4px;color:#424242;letter-spacing:-0.039px;left:401.48px;">Monopoly</div>
<div class="t" id="t49" style="top:525px;font-size:6.4px;color:#424242;letter-spacing:-0.039px;right:440.64px;">8</div>
<div class="t" id="t50" style="top:541px;font-size:6.4px;color:#424242;letter-spacing:-0.039px;left:377.78px;clip-path:inset(0 0 3.4px 0);">9.</div>
<div class="t" id="t51" style="top:541px;font-size:6.4px;color:#424242;letter-spacing:-0.039px;left:401.48px;clip-path:inset(0 0 3.4px 0);">LEGO Jurassic World</div>
<div class="t" id="t52" style="top:541px;font-size:6.4px;color:#424242;letter-spacing:-0.039px;right:440.64px;clip-path:inset(0 0 3.4px 0);">8</div>
<div class="t" id="t53" style="top:549px;font-size:6.4px;color:#424242;letter-spacing:0.043px;left:501.48px;">1 - 100 / 11493</div>
<div class="t" id="t54" style="top:96px;font-size:3.8px;color:#4a4d51;letter-spacing:-0.171px;left:734.35px;transform:scaleX(0.8566);transform-origin:left;">Total</div>
<div class="t" id="t55" style="top:100px;font-size:8px;color:#5f6368;letter-spacing:-0.06px;left:734.48px;">1,168</div>
<div class="t" id="t56" style="top:97px;font-size:9.2px;color:#202124;letter-spacing:0.207px;left:760.1px;">Chart</div>
<div class="t" id="t57" style="top:122px;font-size:6.7px;color:#1a73e8;-webkit-text-stroke:.16px currentColor;letter-spacing:-0.106px;left:746.56px;">SETUP</div>
<div class="t" id="t58" style="top:122px;font-size:6.7px;color:#5f6368;-webkit-text-stroke:.16px currentColor;letter-spacing:-0.179px;left:811.16px;">STYLE</div>
<div class="t" id="t59" style="top:144px;font-size:6px;color:#5f6368;-webkit-text-stroke:.16px currentColor;letter-spacing:-0.068px;left:728.46px;">Data source</div>
<div class="t" id="t60" style="top:158px;font-size:6px;color:#202124;letter-spacing:0.026px;left:745.11px;">vgsales.csv</div>
<div class="t" id="t61" style="top:172px;font-size:6px;color:#2a6fdb;letter-spacing:-0.224px;left:744.61px;">BLEND DATA</div>
<div class="t" id="t62" style="top:187px;font-size:5.2px;color:#5f6368;-webkit-text-stroke:.16px currentColor;letter-spacing:0.057px;left:728.51px;">Date Range Dimension</div>
<div class="t" id="t63" style="top:200px;font-size:6px;color:#5f6368;letter-spacing:-0.01px;left:745.41px;">Add dimension</div>
<div class="t" id="t64" style="top:231px;font-size:6px;color:#5f6368;-webkit-text-stroke:.16px currentColor;letter-spacing:0.167px;left:728.41px;">Metric</div>
<div class="t" id="t65" style="top:249px;font-size:4.8px;color:#3c4043;font-weight:bold;letter-spacing:-0.216px;left:730.59px;transform:scaleX(0.9106);transform-origin:left;">SUM</div>
<div class="t" id="t66" style="top:247px;font-size:6px;color:#202124;letter-spacing:-0.27px;left:745.41px;transform:scaleX(0.9791);transform-origin:left;">EU_Sales</div>
<div class="t" id="t67" style="top:266px;font-size:6px;color:#5f6368;-webkit-text-stroke:.16px currentColor;letter-spacing:0.058px;left:728.41px;">Optional metrics</div>
<div class="t" id="t68" style="top:296px;font-size:6px;color:#5f6368;-webkit-text-stroke:.16px currentColor;letter-spacing:0.008px;left:728.41px;">Sparkline</div>
<div class="t" id="t69" style="top:312px;font-size:6px;color:#5f6368;letter-spacing:-0.01px;left:745.41px;">Add dimension</div>
<div class="t" id="t70" style="top:344px;font-size:5.4px;color:#5f6368;-webkit-text-stroke:.16px currentColor;letter-spacing:0.295px;left:728.35px;">Other Comparison Options</div>
<div class="t" id="t71" style="top:366px;font-size:6px;color:#a0a4a8;letter-spacing:0.067px;left:728.31px;">Period</div>
<div class="t" id="t72" style="top:391px;font-size:6.5px;color:#202124;letter-spacing:0.054px;left:749.08px;">Show as progress</div>
<div class="t" id="t73" style="top:423px;font-size:6.2px;color:#3c4043;letter-spacing:0.111px;left:728.3px;">Filter</div>
<div class="t" id="t74" style="top:435px;font-size:5px;color:#5f6368;-webkit-text-stroke:.16px currentColor;letter-spacing:0.204px;left:728.38px;">Scorecard Filter</div>
<div class="t" id="t75" style="top:447px;font-size:6px;color:#2a6fdb;letter-spacing:-0.263px;left:744.91px;">ADD A FILTER</div>
<div class="t" id="t76" style="top:97px;font-size:9px;color:#202124;-webkit-text-stroke:.16px currentColor;letter-spacing:0.251px;left:875.12px;">Data</div>
<div class="t" id="t77" style="top:124px;font-size:6.3px;color:#80868b;letter-spacing:0.133px;left:870.39px;">Search</div>
<div class="t" id="t78" style="top:147px;font-size:6.2px;color:#3c4043;letter-spacing:-0.138px;left:873.0px;">vgsales.csv</div>
<div class="t" id="t79" style="top:164px;font-size:5.6px;color:#8ed1a1;font-weight:bold;letter-spacing:-0.252px;left:859.94px;transform:scaleX(0.9534);transform-origin:left;">123</div>
<div class="t" id="t80" style="top:163px;font-size:6px;color:#202124;letter-spacing:-0.27px;left:873.91px;transform:scaleX(0.9872);transform-origin:left;">EU_Sales</div>
<div class="t" id="t81" style="top:175px;font-size:5.6px;color:#8ed1a1;font-weight:bold;letter-spacing:-0.252px;left:859.94px;transform:scaleX(0.7252);transform-origin:left;">ABC</div>
<div class="t" id="t82" style="top:175px;font-size:6px;color:#202124;letter-spacing:-0.27px;left:873.91px;transform:scaleX(0.9872);transform-origin:left;">Genre</div>
<div class="t" id="t83" style="top:187px;font-size:5.6px;color:#8ed1a1;font-weight:bold;letter-spacing:-0.252px;left:859.94px;transform:scaleX(0.9534);transform-origin:left;">123</div>
<div class="t" id="t84" style="top:186px;font-size:6px;color:#202124;letter-spacing:-0.27px;left:873.91px;transform:scaleX(0.9872);transform-origin:left;">Global_Sales</div>
<div class="t" id="t85" style="top:199px;font-size:5.6px;color:#8ed1a1;font-weight:bold;letter-spacing:-0.252px;left:859.94px;transform:scaleX(0.9534);transform-origin:left;">123</div>
<div class="t" id="t86" style="top:198px;font-size:6px;color:#202124;letter-spacing:-0.27px;left:873.91px;transform:scaleX(0.9872);transform-origin:left;">JP_Sales</div>
<div class="t" id="t87" style="top:211px;font-size:5.6px;color:#8ed1a1;font-weight:bold;letter-spacing:-0.252px;left:859.94px;transform:scaleX(0.9534);transform-origin:left;">123</div>
<div class="t" id="t88" style="top:210px;font-size:6px;color:#202124;letter-spacing:-0.27px;left:873.91px;transform:scaleX(0.9872);transform-origin:left;">NA_Sales</div>
<div class="t" id="t89" style="top:222px;font-size:5.6px;color:#8ed1a1;font-weight:bold;letter-spacing:-0.252px;left:859.94px;transform:scaleX(0.7252);transform-origin:left;">ABC</div>
<div class="t" id="t90" style="top:222px;font-size:6px;color:#202124;letter-spacing:-0.27px;left:873.91px;transform:scaleX(0.9872);transform-origin:left;">Name</div>
<div class="t" id="t91" style="top:234px;font-size:5.6px;color:#8ed1a1;font-weight:bold;letter-spacing:-0.252px;left:859.94px;transform:scaleX(0.9534);transform-origin:left;">123</div>
<div class="t" id="t92" style="top:233px;font-size:6px;color:#202124;letter-spacing:-0.27px;left:873.91px;transform:scaleX(0.9872);transform-origin:left;">Other_Sales</div>
<div class="t" id="t93" style="top:246px;font-size:5.6px;color:#8ed1a1;font-weight:bold;letter-spacing:-0.252px;left:859.94px;transform:scaleX(0.7252);transform-origin:left;">ABC</div>
<div class="t" id="t94" style="top:245px;font-size:6px;color:#202124;letter-spacing:-0.27px;left:873.91px;transform:scaleX(0.9872);transform-origin:left;">Platform</div>
<div class="t" id="t95" style="top:258px;font-size:5.6px;color:#8ed1a1;font-weight:bold;letter-spacing:-0.252px;left:859.94px;transform:scaleX(0.7252);transform-origin:left;">ABC</div>
<div class="t" id="t96" style="top:257px;font-size:6px;color:#202124;letter-spacing:-0.27px;left:873.91px;transform:scaleX(0.9872);transform-origin:left;">Publisher</div>
<div class="t" id="t97" style="top:269px;font-size:5.6px;color:#8ed1a1;font-weight:bold;letter-spacing:-0.252px;left:859.94px;transform:scaleX(0.7252);transform-origin:left;">ABC</div>
<div class="t" id="t98" style="top:269px;font-size:6px;color:#202124;letter-spacing:-0.27px;left:873.91px;transform:scaleX(0.9872);transform-origin:left;">Rank</div>
<div class="t" id="t99" style="top:280px;font-size:6px;color:#202124;letter-spacing:-0.27px;left:873.91px;transform:scaleX(0.9872);transform-origin:left;">Year</div>
<div class="t" id="t100" style="top:293px;font-size:5.6px;color:#7fb0f7;font-weight:bold;letter-spacing:-0.252px;left:859.94px;transform:scaleX(0.9534);transform-origin:left;">123</div>
<div class="t" id="t101" style="top:292px;font-size:6px;color:#202124;letter-spacing:-0.27px;left:873.91px;transform:scaleX(0.9872);transform-origin:left;">Record Count</div>
<div class="t" id="t102" style="top:537px;font-size:6px;color:#2a6fdb;letter-spacing:0.202px;left:873.01px;">Add a field</div>
<div class="t" id="t103" style="top:551px;font-size:6px;color:#2a6fdb;letter-spacing:0.17px;left:873.01px;">Add a parameter</div>
<div class="t" id="t104" style="top:568px;font-size:6px;color:#2a6fdb;letter-spacing:0.121px;left:871.61px;">Add Data</div>
<div class="t" id="t105" style="top:112px;font-size:6px;color:#1a73e8;-webkit-text-stroke:.16px currentColor;letter-spacing:0.364px;left:995.91px;">Data</div>
<div class="t" id="t106" style="top:151px;font-size:6.4px;color:#1a73e8;-webkit-text-stroke:.16px currentColor;letter-spacing:0.277px;left:986.98px;">Properties</div>
<div class="t" id="t107" style="top:189px;font-size:6.4px;color:#1a73e8;-webkit-text-stroke:.16px currentColor;letter-spacing:0.224px;left:989.18px;">Filter bar</div>
</body>
</html>
